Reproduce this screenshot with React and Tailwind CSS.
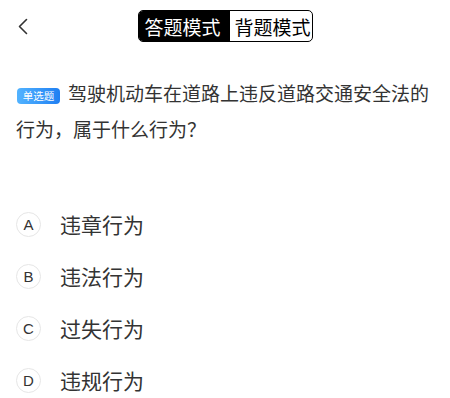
import React from "react";

const font = { fontFamily: '"Noto Sans CJK SC", "Noto Sans", sans-serif' };

function Option({ letter, text }) {
  return (
    <div className="flex h-[52px] items-center">
      <div className="ml-[16px] flex h-[25px] w-[25px] items-center justify-center rounded-full border border-[#e6e6e6] text-[15px] leading-none text-[#333]" style={{ fontFamily: '"Liberation Sans", Arial, sans-serif' }}>
        {letter}
      </div>
      <div className="ml-[19px] text-[21px] leading-none text-[#333]">{text}</div>
    </div>
  );
}

export default function App() {
  return (
    <div className="h-[398px] w-[450px] bg-white" style={font}>
      <div className="relative flex h-[52px] items-center justify-center">
        <svg className="absolute left-[17px] top-[18px]" width="12" height="17" viewBox="0 0 12 17" fill="none">
          <path d="M9.5 1.5 L2.5 8.5 L9.5 15.5" stroke="#333" strokeWidth="1.6" strokeLinecap="round" strokeLinejoin="round" />
        </svg>
        <div className="flex h-[32px] overflow-hidden rounded-[5px] border-[1.5px] border-black text-[19px] leading-none">
          <div className="flex w-[91px] items-center bg-black pl-[6px] text-white">答题模式</div>
          <div className="flex w-[82px] items-center pl-[5px] text-black">背题模式</div>
        </div>
      </div>
      <div className="px-[16px] pt-[23px] text-[19px] leading-[36px] text-[#333]">
        <div className="flex items-center">
          <span className="ml-[1px] mr-[8px] mt-[6px] flex h-[16px] w-[43px] shrink-0 items-center justify-center rounded-[4px] bg-gradient-to-r from-[#52b3ff] to-[#1f7ff2] text-[10.5px] leading-[16px] text-white">
            单选题
          </span>
          <span className="whitespace-nowrap">驾驶机动车在道路上违反道路交通安全法的</span>
        </div>
        <div>行为，属于什么行为？</div>
      </div>
      <div className="pt-[51px]">
        <Option letter="A" text="违章行为" />
        <Option letter="B" text="违法行为" />
        <Option letter="C" text="过失行为" />
        <Option letter="D" text="违规行为" />
      </div>
    </div>
  );
}
